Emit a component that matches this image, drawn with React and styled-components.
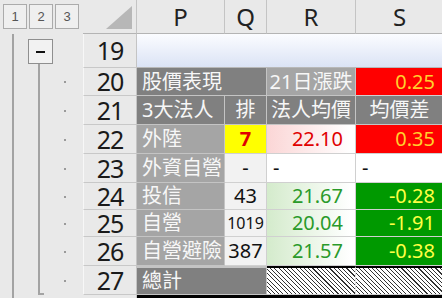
import React from "react";
import styled, { createGlobalStyle, css } from "styled-components";

const Global = createGlobalStyle`
  html, body {
    margin: 0;
    padding: 0;
    background: #e9e9e9;
    overflow: hidden;
  }
  body {
    font-family: "Noto Sans", "Noto Sans CJK TC", sans-serif;
    line-height: 1;
  }
`;

const HEIGHTS = { 19: 34, 20: 28, 21: 29, 22: 29, 23: 29, 24: 27, 25: 27, 26: 29, 27: 29 };
const ROWS = [19, 20, 21, 22, 23, 24, 25, 26, 27];

const Page = styled.div`
  display: flex;
  width: 444px;
  background: #e9e9e9;
`;

/* ---------- outline gutter ---------- */

const Outline = styled.div`
  width: 83px;
  flex: none;
  display: flex;
  flex-direction: column;
`;

const LevelBar = styled.div`
  height: 34px;
  box-sizing: border-box;
  display: flex;
  gap: 2px;
  padding: 4px 0 0 3px;
`;

const LevelButton = styled.div`
  width: 24px;
  height: 25px;
  box-sizing: border-box;
  border: 1px solid #ababab;
  background: #efefef;
  display: flex;
  align-items: center;
  justify-content: center;
  font: 13px "Liberation Sans", sans-serif;
  color: #555;
`;

const OutlineBody = styled.div`
  display: flex;
`;

const LevelOne = styled.div`
  width: 26px;
  display: flex;
`;

const GuideLine = styled.div`
  margin-left: 12px;
  width: 2px;
  background: #a3a3a3;
`;

const LevelTwo = styled.div`
  width: 26px;
  display: flex;
  flex-direction: column;
`;

const MinusButton = styled.div`
  margin: 5px 0 0 2px;
  width: 25px;
  height: 25px;
  box-sizing: border-box;
  border: 1px solid #8f8f8f;
  background: #f2f2f2;
  display: flex;
  align-items: center;
  justify-content: center;
  &::before {
    content: "";
    width: 9px;
    height: 2px;
    background: #111;
  }
`;

const Bracket = styled.div`
  flex: 1;
  margin: 0 0 4px 12px;
  width: 4px;
  border-left: 2px solid #a3a3a3;
  border-bottom: 2px solid #a3a3a3;
`;

const LevelThree = styled.div`
  width: 31px;
  display: flex;
  flex-direction: column;
`;

const DotRow = styled.div`
  height: ${(p) => p.$h}px;
  display: flex;
  align-items: center;
  padding-left: 12px;
  &::before {
    content: "";
    width: 2px;
    height: 2px;
    background: ${(p) => (p.$dot ? "#9a9a9a" : "transparent")};
  }
`;

/* ---------- sheet grid ---------- */

const Grid = styled.div`
  display: grid;
  grid-template-columns: 54px 88px 42px 89px 88px;
  grid-template-rows: 34px ${ROWS.map((r) => HEIGHTS[r] + "px").join(" ")} 4px;
`;

const Corner = styled.div`
  box-sizing: border-box;
  border-right: 1px solid #c4c4c4;
  border-bottom: 1px solid #b4b4b4;
  display: flex;
  justify-content: flex-end;
  align-items: flex-end;
  padding: 0 4px 4px 0;
`;

const SelectAll = styled.div`
  width: 26px;
  height: 23px;
  background: #b7b7b7;
  clip-path: polygon(100% 0, 100% 100%, 0 100%);
`;

const ColHead = styled.div`
  box-sizing: border-box;
  border-right: 1px solid #c4c4c4;
  border-bottom: 1px solid #b4b4b4;
  display: flex;
  align-items: center;
  justify-content: center;
  font-size: 24px;
  color: #222;
`;

const RowHead = styled.div`
  box-sizing: border-box;
  border-left: 1px solid #f7f7f7;
  border-right: 1px solid #c4c4c4;
  border-bottom: 1px solid #c8c8c8;
  display: flex;
  align-items: center;
  justify-content: center;
  font-size: 25px;
  letter-spacing: -1px;
  color: #1a1a1a;
`;

const Band = styled.div`
  grid-column: span 4;
  box-sizing: border-box;
  border-bottom: 1px solid #b8b8b8;
  background: linear-gradient(to bottom, #fbfcff, #dbe3f5);
`;

const cellBase = css`
  box-sizing: border-box;
  border-right: 1px solid #d0d0d0;
  border-bottom: 1px solid #d0d0d0;
  display: flex;
  align-items: center;
  font-size: 20px;
  white-space: nowrap;
  overflow: hidden;
  grid-column: span ${(p) => p.$span || 1};
  ${(p) =>
    p.$total &&
    css`
      border-top: 2px solid #000;
    `}
`;

const Label = styled.div`
  ${cellBase};
  background: ${(p) => (p.$tone === "dark" ? "#808080" : "#a5a5a5")};
  border-color: #c4c4c4;
  color: #f7f7f7;
  justify-content: ${(p) => (p.$center ? "center" : "flex-start")};
  padding-left: ${(p) => (p.$center ? 0 : 5)}px;
`;

const Rank = styled.div`
  ${cellBase};
  justify-content: center;
  background: ${(p) => (p.$hot ? "#ffff00" : "#f2f2f2")};
  color: ${(p) => (p.$hot ? "#e00000" : "#111")};
  font-weight: ${(p) => (p.$hot ? 700 : 400)};
  font-size: ${(p) => (p.$small ? 16 : 20)}px;
`;

const FILLS = {
  blank: "#ffffff",
  pink: "linear-gradient(to right, #fbd6d6, #ffffff 95%)",
  mint: "linear-gradient(to right, #d4ebcc, #ffffff 95%)",
  red: "#ff0000",
  green: "#009900",
};

const Value = styled.div`
  ${cellBase};
  background: ${(p) => FILLS[p.$fill]};
  color: ${(p) => p.$ink};
  justify-content: ${(p) => (p.$left ? "flex-start" : "flex-end")};
  padding: ${(p) => (p.$left ? "0 0 0 6px" : `0 ${p.$pad}px 0 0`)};
`;

const Hatch = styled.div`
  ${cellBase};
  border-right-color: #e0e0e0;
  background: repeating-linear-gradient(
    45deg,
    #ffffff 0,
    #ffffff 2.2px,
    #333333 2.2px,
    #333333 3px
  );
`;

const Rule = styled.div`
  grid-column: span 4;
  background: #000;
`;

const TailHead = styled.div`
  border-right: 1px solid #c4c4c4;
`;

const members = [
  { row: 22, name: "外陸", rank: "7", hot: true, avg: "22.10", avgFill: "pink", avgInk: "#e00000", diff: "0.35", diffFill: "red" },
  { row: 23, name: "外資自營", rank: "-", avg: "-", diff: "-", blank: true },
  { row: 24, name: "投信", rank: "43", avg: "21.67", diff: "-0.28" },
  { row: 25, name: "自營", rank: "1019", small: true, avg: "20.04", diff: "-1.91" },
  { row: 26, name: "自營避險", rank: "387", avg: "21.57", diff: "-0.38" },
];

export default function App() {
  return (
    <Page>
      <Global />
      <Outline>
        <LevelBar>
          <LevelButton>1</LevelButton>
          <LevelButton>2</LevelButton>
          <LevelButton>3</LevelButton>
        </LevelBar>
        <OutlineBody>
          <LevelOne>
            <GuideLine />
          </LevelOne>
          <LevelTwo>
            <MinusButton />
            <Bracket />
          </LevelTwo>
          <LevelThree>
            {ROWS.map((r) => (
              <DotRow key={r} $h={HEIGHTS[r]} $dot={r !== 19} />
            ))}
            <DotRow $h={4} />
          </LevelThree>
        </OutlineBody>
      </Outline>

      <Grid>
        <Corner>
          <SelectAll />
        </Corner>
        {["P", "Q", "R", "S"].map((c) => (
          <ColHead key={c}>{c}</ColHead>
        ))}

        <RowHead>19</RowHead>
        <Band />

        <RowHead>20</RowHead>
        <Label $tone="dark" $span={2}>股價表現</Label>
        <Label $center>21日漲跌</Label>
        <Value $fill="red" $ink="#ffcf2e" $pad={8}>0.25</Value>

        <RowHead>21</RowHead>
        <Label $tone="dark">3大法人</Label>
        <Label $tone="dark" $center>排</Label>
        <Label $tone="dark" $center>法人均價</Label>
        <Label $tone="dark" $center>均價差</Label>

        {members.map((m) => (
          <React.Fragment key={m.row}>
            <RowHead>{m.row}</RowHead>
            <Label>{m.name}</Label>
            <Rank $hot={m.hot} $small={m.small}>{m.rank}</Rank>
            {m.blank ? (
              <>
                <Value $fill="blank" $ink="#111" $left>-</Value>
                <Value $fill="blank" $ink="#111" $left>-</Value>
              </>
            ) : (
              <>
                <Value $fill={m.avgFill || "mint"} $ink={m.avgInk || "#2a9a2a"} $pad={12}>
                  {m.avg}
                </Value>
                <Value
                  $fill={m.diffFill || "green"}
                  $ink={m.diffFill === "red" ? "#ffcf2e" : "#ffff44"}
                  $pad={8}
                >
                  {m.diff}
                </Value>
              </>
            )}
          </React.Fragment>
        ))}

        <RowHead>27</RowHead>
        <Label $tone="dark" $span={2} $total>總計</Label>
        <Hatch $total />
        <Hatch $total />

        <TailHead />
        <Rule />
      </Grid>
    </Page>
  );
}
